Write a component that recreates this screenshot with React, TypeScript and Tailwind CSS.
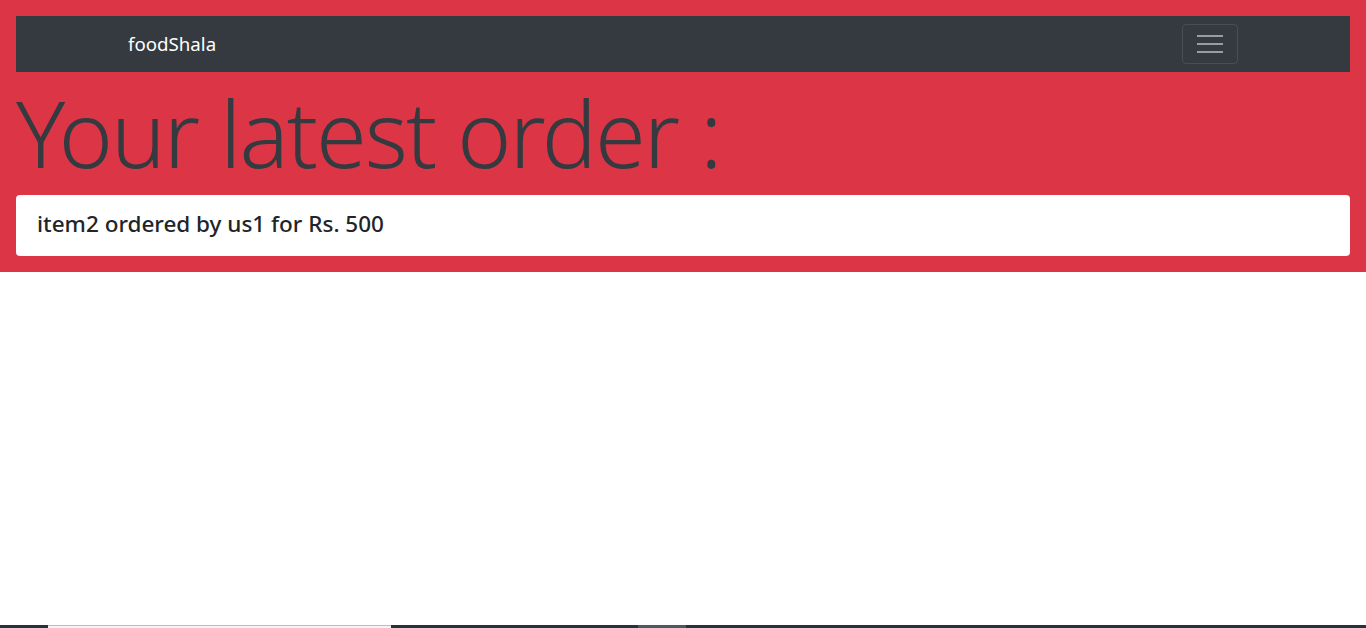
export default function App() {
  return (
    <div className="flex min-h-[628px] flex-col bg-white font-['Noto_Sans','Open_Sans',sans-serif]">
      <section className="bg-[#dc3545] p-4">
        {/* Navbar */}
        <nav className="flex h-14 items-center bg-[#343a40]">
          <div className="mx-auto flex w-[1140px] items-center justify-between px-[15px]">
            <a href="#" className="text-[18.7px] leading-none text-white">
              foodShala
            </a>
            <button className="flex h-10 w-14 flex-col items-center justify-center gap-[6px] rounded border border-white/10">
              <span className="h-[2px] w-[26px] bg-white/50" />
              <span className="h-[2px] w-[26px] bg-white/50" />
              <span className="h-[2px] w-[26px] bg-white/50" />
            </button>
          </div>
        </nav>

        <h1 className="flex h-[123px] items-center pb-[2px] text-[92px] font-light leading-none tracking-[-2px] text-[#343a40]">
          Your latest order :
        </h1>

        <div className="flex h-[61px] items-center rounded bg-white px-[21px] pb-[3px]">
          <h5 className="text-[22.5px] font-medium text-[#212529]">item2 ordered by us1 for Rs. 500</h5>
        </div>
      </section>

      <div className="flex-1" />

      {/* taskbar remnant */}
      <div className="flex h-[3px] bg-[#22333b]">
        <div className="w-12" />
        <div className="w-[343px] border-t border-[#bdbdbd] bg-[#f4f4f4]" />
        <div className="w-[247px]" />
        <div className="w-12 bg-[#4c5a60]" />
      </div>
    </div>
  );
}
